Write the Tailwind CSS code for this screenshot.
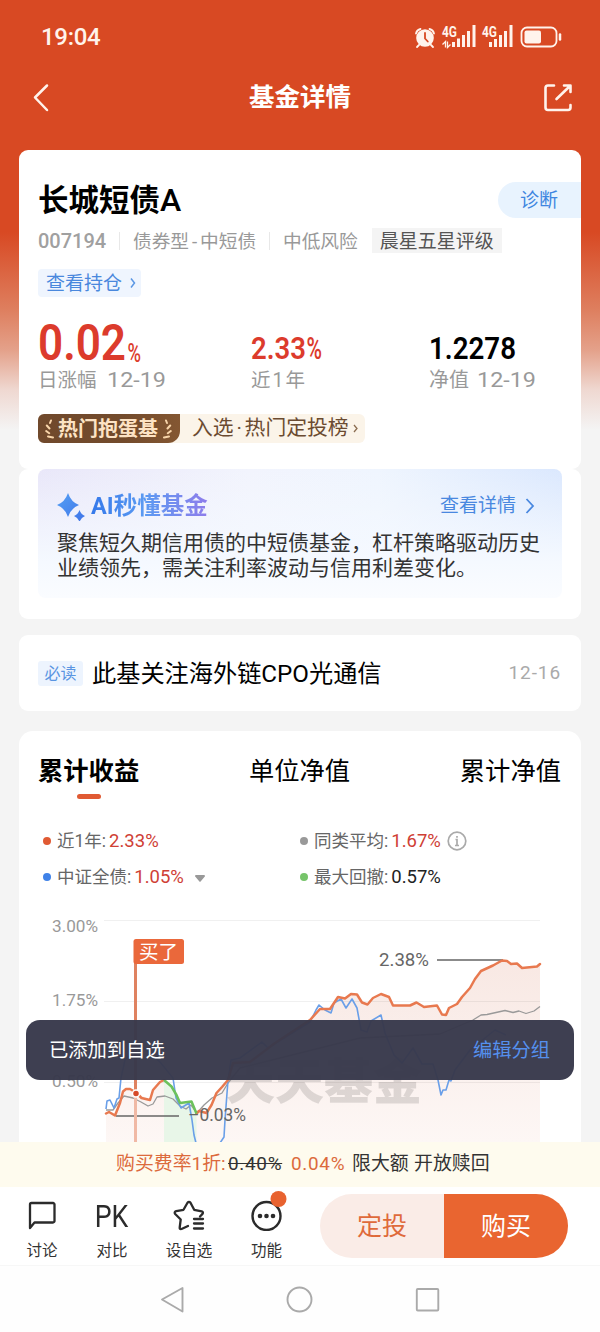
<!DOCTYPE html>
<html lang="zh-CN">
<head>
<meta charset="utf-8">
<title>基金详情</title>
<script src="https://cdn.jsdelivr.net/npm/@tailwindcss/browser@4"></script>
</head>
<body class="bg-[#f4f4f4]">
<div class="relative w-[600px] h-[1332px] overflow-hidden flex flex-col bg-[#f4f4f4] bg-[linear-gradient(#d84923_0px,#d84923_232px,#de7f5f_310px,#e4a18a_350px,#efd8d1_390px,#f4f4f4_430px)] font-['Roboto','Noto_Sans_CJK_SC',sans-serif] whitespace-nowrap text-black">

  <!-- Status bar -->
  <div class="h-[68px] shrink-0 flex items-center justify-between pl-[41px] pr-[38px] pt-[6px] text-[#fff3ec]">
    <span class="text-[24px] leading-[30px] font-medium tracking-[-0.3px]">19:04</span>
    <svg width="148" height="28" viewBox="414 23 148 28" fill="none">
      <circle cx="425" cy="38" r="8.8" fill="#fff3ec"/>
      <path d="M416 33.5a6 6 0 0 1 4.500-4.500M434 33.500a6 6 0 0 0-4.500-4.500M419 45l-2 2M431 45l2 2" stroke="#fff3ec" stroke-width="1.800" stroke-linecap="round"/>
      <path d="M425 33v5.500l2.800 3" stroke="#d84923" stroke-width="1.800" stroke-linecap="round"/>
      <g fill="#fff3ec" font-family="Roboto, sans-serif" font-weight="700" font-size="14">
        <text x="442" y="37" textLength="15" lengthAdjust="spacingAndGlyphs">4G</text>
        <text x="482" y="37" textLength="15" lengthAdjust="spacingAndGlyphs">4G</text>
      </g>
      <path d="M453.500 48v-5M458.500 48v-8.500M463.500 48v-12M468.500 48v-16M474 48v-22M490.500 48v-5M495.500 48v-8M500.500 48v-12M505.500 48v-16M511 48v-22" transform="translate(0 -1)" stroke="#fff3ec" stroke-width="3"/>
      <path d="M442.500 44.500l3-3v6M450.500 44.500l-3 3v-6" stroke="#fff3ec" stroke-width="1.300"/>
      <rect x="521.500" y="27.500" width="35" height="19" rx="5.500" stroke="#fff3ec" stroke-width="1.800"/>
      <rect x="524.500" y="30.500" width="16.500" height="13" rx="2" fill="#fff3ec"/>
      <path d="M560 34.500v5" stroke="#fff3ec" stroke-width="2.500" stroke-linecap="round"/>
    </svg>
  </div>

  <!-- Title bar -->
  <div class="h-[82px] shrink-0 flex items-start justify-between pl-[31px] pr-[26px] pt-[12px]">
    <svg class="mt-[2px]" width="20" height="32" viewBox="31 82 20 32" fill="none" stroke="#fff3ec" stroke-width="2.500" stroke-linecap="round" stroke-linejoin="round"><path d="M47 85.500L35 97.500l12 12.500"/></svg>
    <span class="text-[25.500px] leading-[34px] font-bold text-white ml-[7px]">基金详情</span>
    <svg class="mt-[2px]" width="32" height="32" viewBox="542 82 32 32" fill="none" stroke="#fff3ec" stroke-width="2.600" stroke-linecap="round" stroke-linejoin="round"><path d="M554 85.500h-6a2.500 2.500 0 0 0-2.500 2.500v19.500a2.500 2.500 0 0 0 2.500 2.500h20a2.500 2.500 0 0 0 2.500-2.500V105M564 85.500h6.500V92M570 86l-13.500 13"/></svg>
  </div>

  <!-- Fund summary -->
  <section class="mx-[19px] h-[319px] shrink-0 rounded-[9px] bg-white pl-[19px] flex flex-col">
    <div class="flex justify-between pt-[32px]">
      <h1 class="text-[30.500px] leading-[36px] font-bold">长城短债<span class="font-medium text-[32px]">A</span></h1>
      <span class="w-[83px] h-[36px] rounded-l-full bg-[#e8f3fe] text-[#3f86e0] text-[19px] leading-[37px] pl-[22px]">诊断</span>
    </div>
    <div class="flex items-center h-[25px] mt-[9px] text-[18.700px] text-[#999]">
      <span class="w-[81px] text-[20px] tracking-[0px] font-medium text-[#a0a0a0]">007194</span>
      <span class="w-px h-[18px] bg-[#e8e8e8]"></span>
      <span class="w-[136px] ml-[13px] pt-[3px]">债券型<span class="inline-block w-[11px] text-center">-</span>中短债</span>
      <span class="w-px h-[18px] bg-[#e8e8e8]"></span>
      <span class="ml-[13px] pt-[3px]">中低风险</span>
      <span class="ml-[14px] h-[25px] w-[130px] bg-[#f4f4f4] text-[#555] text-[19px] leading-[27px] pl-[8px]">晨星五星评级</span>
    </div>
    <div class="mt-[16px] w-[103px] h-[28px] rounded-[4px] bg-[#eff5fe] flex items-center pl-[8px] text-[19px] text-[#4a88dd]">
      <span class="leading-[28px] pt-[2px]">查看持仓</span>
      <svg class="ml-[7px]" width="8" height="12" viewBox="0 0 8 12" fill="none" stroke="#5b97e4" stroke-width="1.500"><path d="M2 1.500L5.500 6 2 10.500"/></svg>
    </div>
    <div class="grid grid-cols-[213px_178px_1fr] mt-[24px]">
      <svg class="overflow-visible" width="140" height="74" viewBox="38 321 140 74" font-family="Roboto, 'Noto Sans CJK SC', sans-serif">
        <g fill="#dc3b2c"><text x="38" y="360" font-size="50" font-weight="600" textLength="88" lengthAdjust="spacingAndGlyphs">0.02</text>
        <text x="127.500" y="362" font-size="26" font-weight="500" textLength="13.500" lengthAdjust="spacingAndGlyphs">%</text></g>
        <text x="38" y="387" font-size="19.500" fill="#999">日涨幅</text><text x="107" y="387" font-size="20.500" fill="#999" textLength="59" lengthAdjust="spacingAndGlyphs">12-19</text>
      </svg>
      <svg class="overflow-visible" width="140" height="74" viewBox="251 321 140 74" font-family="Roboto, 'Noto Sans CJK SC', sans-serif">
        <text x="251" y="359" font-size="31.500" font-weight="600" fill="#dc3b2c" textLength="55" lengthAdjust="spacingAndGlyphs">2.33</text>
        <text x="306.500" y="359" font-size="31" font-weight="500" fill="#dc3b2c" textLength="15.500" lengthAdjust="spacingAndGlyphs">%</text>
        <text x="251" y="387" font-size="19.500" fill="#999" textLength="54">近1年</text>
      </svg>
      <svg class="overflow-visible" width="140" height="74" viewBox="429 321 140 74" font-family="Roboto, 'Noto Sans CJK SC', sans-serif">
        <text x="429" y="359" font-size="31.500" font-weight="600" textLength="87" lengthAdjust="spacingAndGlyphs">1.2278</text>
        <text x="429" y="387" font-size="20" fill="#999">净值</text><text x="477" y="387" font-size="20.500" fill="#999" textLength="59" lengthAdjust="spacingAndGlyphs">12-19</text>
      </svg>
    </div>
    <div class="mt-[19px] flex h-[29px] w-[327px] rounded-[6px] bg-[#fbf4e9]">
      <div class="w-[142px] rounded-l-[6px] rounded-br-[12px] bg-[linear-gradient(90deg,#70492c,#734b2c_60%,#845732)] flex items-center text-[#fde3c4] text-[20px] font-bold">
        <svg class="ml-[7px]" width="10" height="21" viewBox="0 0 10 21" fill="none" stroke="#f8d5aa" stroke-width="2" stroke-linecap="round"><path d="M6 2.500L5 5M1.800 7.500l2.700 3M1.200 13l3 2.200M3 18.500l5 1"/></svg>
        <span class="leading-[28px] ml-[3px] w-[102px]">热门抱蛋基</span>
        <svg class="ml-[2px] -scale-x-100" width="10" height="21" viewBox="0 0 10 21" fill="none" stroke="#f8d5aa" stroke-width="2" stroke-linecap="round"><path d="M6 2.500L5 5M1.800 7.500l2.700 3M1.200 13l3 2.200M3 18.500l5 1"/></svg>
      </div>
      <span class="ml-[12px] text-[20.800px] leading-[29px] text-[#6b4b31]">入选<span class="inline-block w-[11px] text-center">·</span>热门定投榜</span>
      <svg class="ml-[4px] mt-[10px]" width="6" height="9" viewBox="0 0 6 9" fill="none" stroke="#8a6c50" stroke-width="1.300"><path d="M1 1l3 3.500L1 8"/></svg>
    </div>
  </section>

  <!-- AI summary -->
  <section class="mx-[19px] h-[150px] shrink-0 rounded-[9px] bg-white px-[19px]">
    <div class="h-[129px] rounded-[8px] px-[19px] pt-[21px] bg-[linear-gradient(180deg,transparent_0%,#f5f9ff_72%,#fafcff_100%),linear-gradient(90deg,#e9e7f9_0%,#f2f4fd_40%,#eff5fe_65%,#dbe8fe_100%)]">
      <div class="flex items-center h-[31px]">
        <svg class="mt-[1px]" width="30" height="30" viewBox="57 491 30 30"><defs><linearGradient id="spark" x1="0" x2="1" y1="0" y2="1"><stop stop-color="#55a0f4"/><stop offset="1" stop-color="#3f74e8"/></linearGradient></defs><path fill="url(#spark)" d="M68 493q3 9 11 12q-8 3-11 12q-3-9-11-12q8-3 11-12zM79.500 510q1.500 4.500 5.500 6q-4 1.500-5.500 6q-1.500-4.500-5.500-6q4-1.500 5.500-6z"/></svg>
        <span class="ml-[4px] w-[118px] text-[23.500px] leading-[30px] font-bold text-transparent bg-clip-text bg-[linear-gradient(90deg,#3478ea,#5b9af2_45%,#8f7ceb)]">AI秒懂基金</span>
        <span class="ml-auto text-[19px] leading-[28px] text-[#4988e0]">查看详情</span>
        <svg class="ml-[9px] mr-[8px]" width="10" height="18" viewBox="0 0 10 18" fill="none" stroke="#4988e0" stroke-width="1.800"><path d="M1.500 2L8 9l-6.500 7"/></svg>
      </div>
      <p class="mt-[10px] text-[21px] leading-[25px] text-[#333]">聚焦短久期信用债的中短债基金，杠杆策略驱动历史<br>业绩领先，需关注利率波动与信用利差变化。</p>
    </div>
  </section>

  <!-- Must-read -->
  <section class="mx-[19px] mt-[16px] h-[76px] shrink-0 rounded-[9px] bg-white px-[19px] flex items-center">
    <span class="w-[45px] h-[25px] rounded-[3px] bg-[#edf4fe] text-[#5a95e2] text-[16px] leading-[25px] text-center">必读</span>
    <span class="ml-[9px] text-[24.200px] leading-[34px] mt-[1px]">此基关注海外链CPO光通信</span>
    <span class="ml-auto mr-px text-[19px] text-[#aaa] tracking-[0.900px]">12-16</span>
  </section>

  <!-- Performance -->
  <section class="mx-[19px] mt-[20px] h-[411px] shrink-0 rounded-t-[14px] bg-white flex flex-col">
    <div class="flex justify-between pl-[19px] pr-[20px] pt-[23px] text-[25.300px] leading-[36px]">
      <div class="flex flex-col items-center font-bold"><span>累计收益</span><span class="mt-[4px] w-[24px] h-[5px] rounded-full bg-[#e05a33]"></span></div>
      <span>单位净值</span>
      <span>累计净值</span>
    </div>
    <div class="grid grid-cols-[257px_1fr] pl-[24px] mt-[24px] text-[17.500px] leading-[36px] text-[#666]">
      <div class="flex items-center h-[36px]"><i class="size-[8px] rounded-full bg-[#e05a33]"></i><span class="ml-[6px]">近1年:</span><span class="ml-[3px] text-[18.500px] text-[#cf4035]">2.33%</span></div>
      <div class="flex items-center h-[36px]"><i class="size-[8px] rounded-full bg-[#999]"></i><span class="ml-[6px]">同类平均:</span><span class="ml-[3px] text-[18.500px] text-[#cf4035]">1.67%</span>
        <svg class="ml-[6px]" width="20" height="20" viewBox="0 0 20 20" fill="none" stroke="#aaa" stroke-width="1.700"><circle cx="10" cy="10" r="8.800"/><path d="M8.500 8.500H10V14.500M8 14.500h4M10 5v1.800"/></svg></div>
      <div class="flex items-center h-[36px]"><i class="size-[8px] rounded-full bg-[#3f82e8]"></i><span class="ml-[6px]">中证全债:</span><span class="ml-[3px] text-[18.500px] text-[#cf4035]">1.05%</span>
        <svg class="ml-[11px] mt-[2px]" width="10" height="7" viewBox="0 0 10 7" fill="#999"><path d="M1 0h8a1 1 0 0 1 .8 1.600L5.800 6.200a1 1 0 0 1-1.600 0L.2 1.600A1 1 0 0 1 1 0z"/></svg></div>
      <div class="flex items-center h-[36px]"><i class="size-[8px] rounded-full bg-[#76c46a]"></i><span class="ml-[6px]">最大回撤:</span><span class="ml-[3px] text-[18.500px] text-[#222]">0.57%</span></div>
    </div>
    <svg class="mt-auto shrink-0" width="562" height="237" viewBox="19 905 562 237" fill="none" font-family="Roboto, 'Noto Sans CJK SC', sans-serif">
      <defs><linearGradient id="area" x1="0" x2="0" y1="960" y2="1142" gradientUnits="userSpaceOnUse"><stop stop-color="#f8e8e3"/><stop offset=".6" stop-color="#fbf1ee"/><stop offset="1" stop-color="#fdf7f5"/></linearGradient></defs>
      <path fill="url(#area)" d="M106 1142V1113.500L115 1115.500 120 1103 123 1091.500 130 1089 136 1092.500 150 1100 153 1090 164 1080 171.500 1086.500 180 1103 191.500 1101.500 196.500 1113.500 206.500 1113 216.500 1093 228 1080 233 1063 250 1060 310 1020 320 1009 330 1009 338 997 345 998.500 355 994 362 1002.500 367.500 1004.500 381 994 389 997 393 1005.500 410 1005.500 416.500 1002.500 424 1007 437 1005.500 442 1014.500 446 1015 449 1008 457 1004 470 988 481 971 502 960.500 511 964 517 963.500 522 968 537 966.500 540 964V1142z"/>
      <path fill="#e8f6e8" d="M164 1080L171.500 1086.500 180 1103 191.500 1101.500 196.500 1113.500V1142H164z"/>
      <path stroke="#000" stroke-opacity=".06" d="M104 920.500h436M104 1001.500h436M104 1082.500h436"/>
      <g fill="#999" font-size="16.500">
        <text x="52" y="932" textLength="46" lengthAdjust="spacingAndGlyphs">3.00%</text>
        <text x="52" y="1006" textLength="46" lengthAdjust="spacingAndGlyphs">1.75%</text>
        <text x="52" y="1087" textLength="46" lengthAdjust="spacingAndGlyphs">0.50%</text>
      </g>
      <text x="226" y="1099" font-size="49" font-weight="900" fill="#000" fill-opacity=".12" textLength="196">天天基金</text>
      <path stroke="#999" stroke-width="1.300" stroke-linejoin="round" d="M106 1110L113 1110 118 1103 124 1096 133 1098 141 1102 148 1106 153 1104 157 1097 165 1096 173 1099 180 1106 186 1109 191 1105 197 1113 204 1105 212 1098 222 1093 228 1083 240 1068 280 1058 320 1048 360 1038 400 1036 440 1034 473 1020 481 1015 487 1014.500 505 1010.500 513 1012.500 519 1011 526 1013.500 534 1011 540 1006.500"/>
      <path stroke="#6a9fe8" stroke-width="1.600" stroke-linejoin="round" d="M106 1109L107 1101 110 1100 114 1108 117 1099 119 1098 121 1078 125 1060 140 1045 160 1062 173 1078 176 1098 181 1108 189 1103 192 1120 194 1135 196 1143M220 1143L224 1137 225 1120 228 1080 231 1060 240 1058 262 1042 268 1048 310 1022 316 1010 319 1005 325 1010 331 1013 334 1003 341 999 346 1008 352 999 357 1008 361 1030 367 1032 371 1021 381 1015 385 1033 394 1055 402 1063 413 1048 422 1064 433 1064 438 1080 441 1095 443 1090 446 1090 449 1080 451 1081 455 1070 470 1050 495 1030 506 1035"/>
      <path stroke="#666" stroke-width="1.500" d="M116 1116h63M437 960h66"/>
      <path stroke="#e8794f" stroke-width="2.500" stroke-linejoin="round" stroke-linecap="round" d="M106 1113.500L109 1112 115 1115.500 120 1103 123 1091.500 126 1089 130 1089 136 1092.500 141.500 1098 150 1100 153 1090 160 1082 164 1080M196.500 1113.500L199 1111 206.500 1113 211.500 1105 216.500 1093 222 1087 228 1080 233 1063 250 1062 275 1043 310 1020 320 1009 330 1009 338 997 345 998.500 351 994 357 994.500 362 1002.500 367.500 1004.500 373 998 381 994 389 997 393 1005.500 410 1005.500 416.500 1002.500 424 1007 437 1005.500 442 1014.500 446 1015 449 1008 457 1004 462 997 470 988 475 979 481 971 493 965.500 502 960.500 507 961 511 964 517 963.500 522 968 537 966.500 540 964"/>
      <path stroke="#6cc25c" stroke-width="2.500" stroke-linejoin="round" d="M164 1080L171.500 1086.500 176.500 1095 180 1103 191.500 1101.500 196.500 1113.500"/>
      <path stroke="#df8260" stroke-width="3" d="M135.500 962V1090"/><path stroke="#f0b9a5" stroke-width="3" d="M135.500 1095V1142"/>
      <circle cx="136" cy="1093.500" r="3.500" fill="#d64a2a" stroke="#fff" stroke-width="1.500"/>
      <rect x="133.500" y="939" width="50.500" height="25" rx="2.500" fill="#ea683b"/>
      <text x="139" y="959" font-size="19.500" fill="#fff">买了</text>
      <text x="379" y="966" font-size="18.500" fill="#666" textLength="50" lengthAdjust="spacingAndGlyphs">2.38%</text>
      <text x="188" y="1121" font-size="18.500" fill="#666" textLength="58" lengthAdjust="spacingAndGlyphs">–0.03%</text>
    </svg>
  </section>

  <!-- Fee strip -->
  <div class="h-[45px] shrink-0 bg-[#fefbee] flex items-center pl-[116px] text-[18.900px] text-[#333]">
    <span class="w-[112px] text-[#dc6a3c]">购买费率1折:</span><span class="w-[63px]"><span class="line-through tracking-[0.700px]">0.40%</span></span><span class="w-[61px] text-[#dc6a3c] tracking-[0.700px]">0.04%</span><span class="w-[62px]">限大额</span><span>开放赎回</span>
  </div>

  <!-- Actions -->
  <div class="h-[79px] shrink-0 bg-white flex border-b border-[#f7f7f7] text-[15.500px] leading-[22px] text-[#333]">
    <div class="w-[84px] flex flex-col items-center pt-[12px]">
      <svg width="30" height="32" viewBox="27 1199 30 32" fill="none" stroke="#2b2b2b" stroke-width="2.300" stroke-linejoin="round"><path d="M30 1228V1204.500a1.500 1.500 0 0 1 1.500-1.500H53a1.500 1.500 0 0 1 1.500 1.500V1221a1.500 1.500 0 0 1-1.500 1.500H34.500z"/></svg>
      <span class="mt-[9px]">讨论</span>
    </div>
    <div class="w-[56px] flex flex-col items-center pt-[12px]">
      <span class="h-[32px] text-[31px] leading-[36px] text-[#2b2b2b] scale-x-[0.86]">PK</span>
      <span class="mt-[9px]">对比</span>
    </div>
    <div class="w-[98px] flex flex-col items-center pt-[12px]">
      <svg width="34" height="32" viewBox="172 1199 34 32" fill="none" stroke="#2b2b2b" stroke-width="2.300" stroke-linejoin="round" stroke-linecap="round"><path d="M188 1226l-6.500 3q-2 .5-1.800-1.500l1-8-5.500-5.500q-1.500-2 1-2.800l7.300-1.400 4-7q1.500-2 3 0l3.700 7 7.500 1.500q2 .8.800 2.600l-2.500 2.600M194 1219h9M194 1223.500h9M194 1228.500h9"/></svg>
      <span class="mt-[9px]">设自选</span>
    </div>
    <div class="w-[57px] flex flex-col items-center pt-[1px]">
      <svg width="46" height="43" viewBox="244 1188 46 43" fill="none"><circle cx="266.500" cy="1216" r="14" stroke="#2b2b2b" stroke-width="2.400"/><g fill="#2b2b2b"><circle cx="260" cy="1216" r="2.300"/><circle cx="266.500" cy="1216" r="2.300"/><circle cx="273" cy="1216" r="2.300"/></g><circle cx="278.500" cy="1199" r="8" fill="#e8622f"/></svg>
      <span class="mt-[9px]">功能</span>
    </div>
    <div class="ml-[25px] mt-[7px] w-[248px] h-[64px] rounded-full overflow-hidden grid grid-cols-2 text-center text-[25px] leading-[65px]">
      <span class="bg-[#faece7] text-[#df6a3b]">定投</span>
      <span class="bg-[#e96530] text-white">购买</span>
    </div>
  </div>

  <!-- System navigation -->
  <div class="h-[66px] shrink-0 bg-[#fefefe]">
    <svg width="600" height="66" viewBox="0 1266 600 66" fill="none" stroke="#aaa" stroke-width="1.900" stroke-linejoin="round"><path d="M182.500 1288v23.500L162 1299.500z"/><circle cx="299.500" cy="1299.500" r="12"/><rect x="416.800" y="1289" width="21.500" height="21.500" rx="1"/></svg>
  </div>

  <!-- Toast -->
  <div class="absolute left-[26px] top-[1020px] w-[548px] h-[60px] rounded-[14px] bg-[#38394b]/97 flex items-center justify-between pl-[23px] pr-[24px] pt-[2px] text-[19.300px] text-white">
    <span>已添加到自选</span><span class="text-[#5590ee]">编辑分组</span>
  </div>
</div>
</body>
</html>
